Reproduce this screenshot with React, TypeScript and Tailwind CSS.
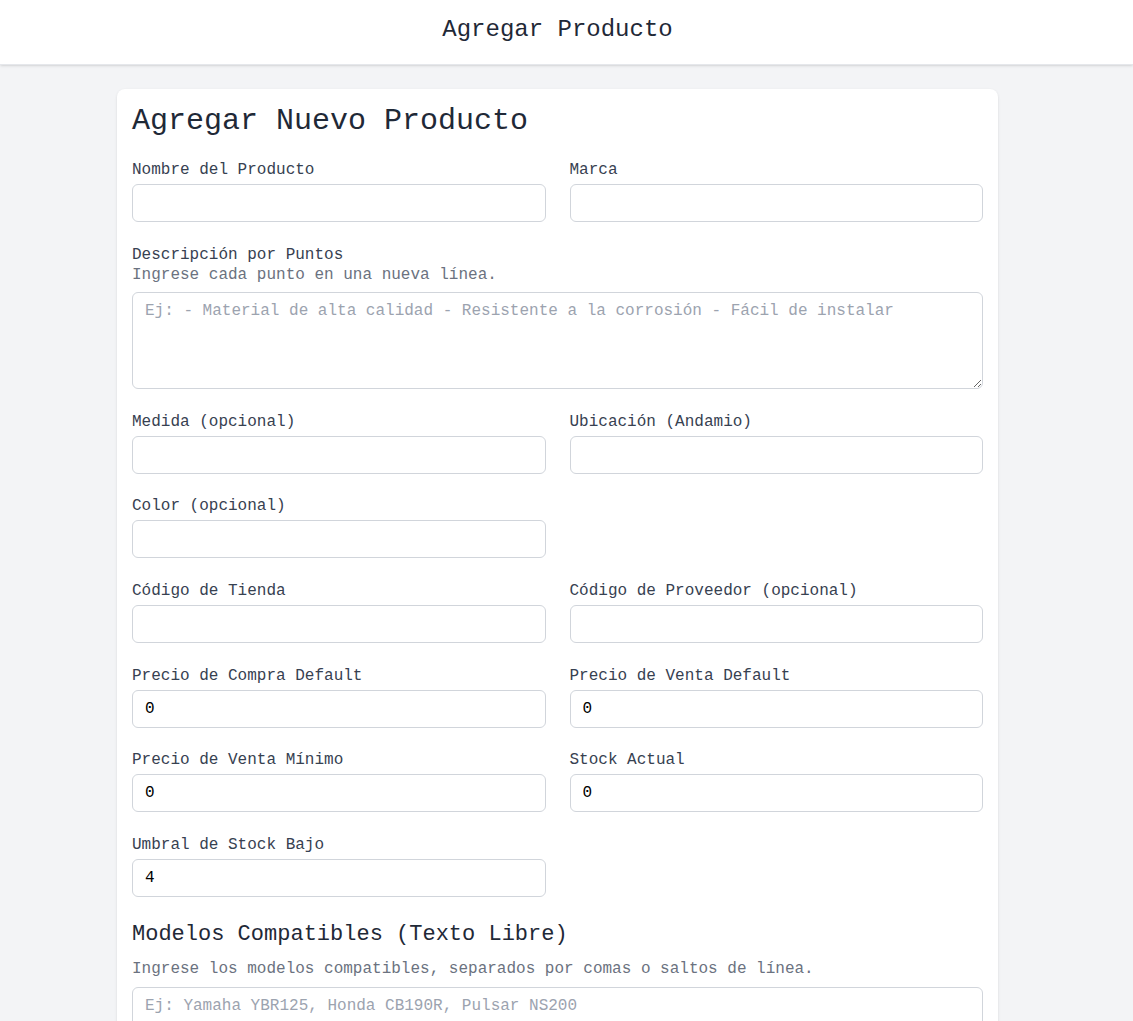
import { useState } from "react";

type Field = {
  id: string;
  label: string;
  value?: string;
};

const rows: (Field | null)[][] = [
  [
    { id: "medida", label: "Medida (opcional)" },
    { id: "ubicacion", label: "Ubicación (Andamio)" },
  ],
  [{ id: "color", label: "Color (opcional)" }, null],
  [
    { id: "codigoTienda", label: "Código de Tienda" },
    { id: "codigoProveedor", label: "Código de Proveedor (opcional)" },
  ],
  [
    { id: "precioCompra", label: "Precio de Compra Default", value: "0" },
    { id: "precioVenta", label: "Precio de Venta Default", value: "0" },
  ],
  [
    { id: "precioMinimo", label: "Precio de Venta Mínimo", value: "0" },
    { id: "stock", label: "Stock Actual", value: "0" },
  ],
  [{ id: "umbral", label: "Umbral de Stock Bajo", value: "4" }, null],
];

const inputClass =
  "block w-full h-[38px] rounded-md border border-[#d1d5db] bg-white px-[12px] text-[16px] text-black outline-none placeholder:text-[#9ca3af]";

function TextField({ field }: { field: Field }) {
  const [value, setValue] = useState(field.value ?? "");
  return (
    <div>
      <label
        htmlFor={field.id}
        className="mb-[2px] block text-[16px] leading-6 text-[#374151]"
      >
        {field.label}
      </label>
      <input
        id={field.id}
        type="text"
        value={value}
        onChange={(e) => setValue(e.target.value)}
        className={inputClass}
      />
    </div>
  );
}

export default function App() {
  return (
    <div className="min-h-screen bg-[#f3f4f6] font-['Liberation_Mono','Courier_New',monospace] text-[#1f2937]">
      <header className="border-b border-[#e5e7eb] bg-white pt-[14px] pb-[18px] shadow-sm">
        <h1 className="w-[1115px] text-center text-2xl leading-8 text-[#1f2937]">
          Agregar Producto
        </h1>
      </header>

      <main className="w-[1115px] pt-6">
        <div className="mx-auto w-[881px] rounded-lg bg-white px-[15px] pt-[14px] pb-[15px] shadow-sm">
          <h2 className="mb-[19px] text-3xl leading-9 text-[#1f2937]">
            Agregar Nuevo Producto
          </h2>

          <div className="flex flex-col gap-[20.7px]">
            <div className="grid grid-cols-2 gap-x-6">
              <TextField field={{ id: "nombre", label: "Nombre del Producto" }} />
              <TextField field={{ id: "marca", label: "Marca" }} />
            </div>

            <div>
              <label
                htmlFor="descripcion"
                className="block text-[16px] leading-6 text-[#374151]"
              >
                Descripción por Puntos
              </label>
              <p className="text-[16px] leading-4 text-[#6b7280]">
                Ingrese cada punto en una nueva línea.
              </p>
              <textarea
                id="descripcion"
                rows={3}
                placeholder="Ej: - Material de alta calidad - Resistente a la corrosión - Fácil de instalar"
                className="mt-[9.3px] block h-[97px] w-full rounded-md border border-[#d1d5db] bg-white px-[12px] py-[6px] text-[16px] leading-6 outline-none placeholder:text-[#9ca3af]"
              />
            </div>

            {rows.map((row, i) => (
              <div key={i} className="grid grid-cols-2 gap-x-6">
                {row.map((field, j) =>
                  field ? <TextField key={field.id} field={field} /> : <div key={j} />
                )}
              </div>
            ))}
          </div>

          <h3 className="mt-[22px] text-[22px] leading-8 text-[#1f2937]">
            Modelos Compatibles (Texto Libre)
          </h3>
          <p className="mt-[6px] text-[16px] leading-6 text-[#6b7280]">
            Ingrese los modelos compatibles, separados por comas o saltos de línea.
          </p>
          <textarea
            rows={4}
            placeholder="Ej: Yamaha YBR125, Honda CB190R, Pulsar NS200"
            className="mt-[6px] block h-[110px] w-full rounded-md border border-[#d1d5db] bg-white px-[12px] py-[6px] text-[16px] leading-6 outline-none placeholder:text-[#9ca3af]"
          />
        </div>
      </main>
    </div>
  );
}
